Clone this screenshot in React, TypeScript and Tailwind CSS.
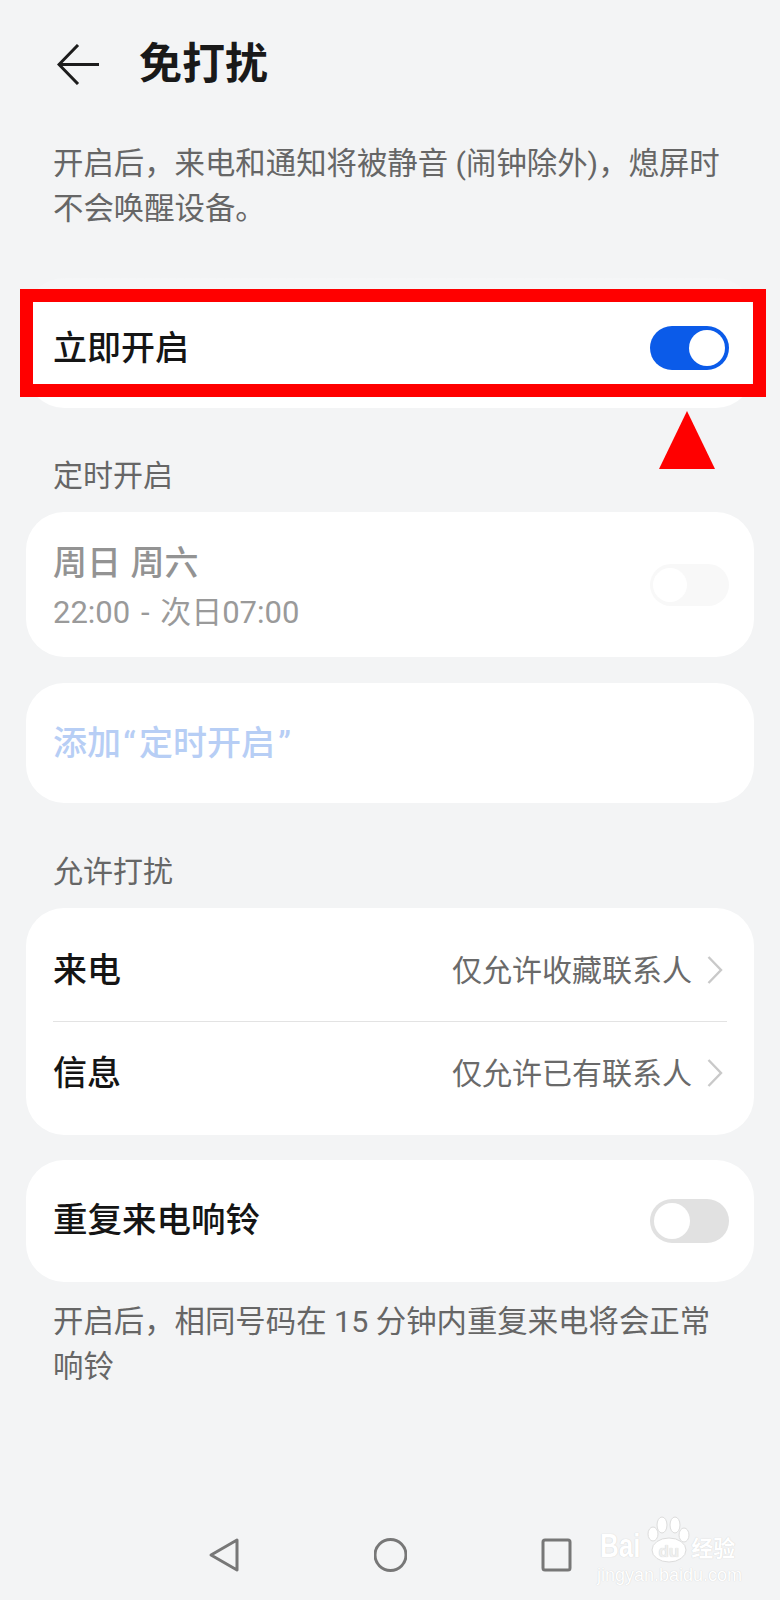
import React from 'react';

const Toggle: React.FC<{ kind: 'on' | 'off' | 'faint' }> = ({ kind }) => {
    if (kind === 'on') {
        return (
            <div className="w-[79px] h-[44px] rounded-full bg-[#0b5be9] flex items-center justify-end pr-[4px] shrink-0">
                <div className="w-[36px] h-[36px] rounded-full bg-white" />
            </div>
        );
    }
    if (kind === 'faint') {
        return (
            <div className="w-[79px] h-[42px] rounded-full bg-[#f8f8f8] flex items-center pl-[3px] shrink-0">
                <div className="w-[34px] h-[34px] rounded-full bg-white" />
            </div>
        );
    }
    return (
        <div className="w-[79px] h-[44px] rounded-full bg-[#e1e1e1] flex items-center pl-[4px] shrink-0">
            <div className="w-[36px] h-[36px] rounded-full bg-white" />
        </div>
    );
};

const Chevron = () => (
    <svg width="16" height="28" viewBox="0 0 16 28" fill="none" className="shrink-0 ml-[15px]">
        <polyline points="1.5,1 14,14 1.5,27" stroke="#c9c9c9" strokeWidth="2.4" />
    </svg>
);

const LinkRow: React.FC<{ label: string; value: string }> = ({ label, value }) => (
    <div className="h-[102px] flex items-center justify-between">
        <span className="text-[34px] font-medium text-[#151515]">{label}</span>
        <div className="flex items-center pr-[4px]">
            <span className="text-[30px] text-[#6a6a6a]">{value}</span>
            <Chevron />
        </div>
    </div>
);

const SectionLabel: React.FC<{ children: React.ReactNode }> = ({ children }) => (
    <h3 className="px-[53px] text-[30px] leading-[40px] text-[#666666]">{children}</h3>
);

const Watermark = () => (
    <div className="absolute left-[597px] top-[1512px] w-[145px] h-[74px] text-white [text-shadow:0_0_1px_#c8c8c8]">
        <svg width="48" height="52" viewBox="0 0 48 52" fill="#ffffff" stroke="#dcdcdc" strokeWidth="1" className="absolute left-[48px] top-0">
            <ellipse cx="8" cy="22" rx="5" ry="7" />
            <ellipse cx="17" cy="13" rx="5" ry="8" />
            <ellipse cx="30" cy="13" rx="5" ry="8" />
            <ellipse cx="39" cy="23" rx="5" ry="7" />
            <ellipse cx="24" cy="38" rx="17" ry="12" />
        </svg>
        <div className="absolute left-[3px] top-[24px] flex items-center whitespace-nowrap leading-none font-['Liberation_Sans','Noto_Sans_CJK_SC',sans-serif]">
            <span className="text-[26px] font-bold origin-bottom scale-y-125">Bai</span>
            <span className="relative text-[17px] font-bold ml-[18px] mt-[4px] text-[#efefef]">du</span>
            <span className="text-[22px] ml-[12px] font-bold">经验</span>
        </div>
        <div className="absolute left-0 top-[54px] text-[18px] leading-none whitespace-nowrap font-['Liberation_Sans',sans-serif]">jingyan.baidu.com</div>
    </div>
);

export default function App() {
    return (
        <div className="relative w-[780px] h-[1600px] overflow-hidden bg-[#f3f4f5] flex flex-col font-['Roboto','Noto_Sans_CJK_SC',sans-serif]">
            <header className="h-[128px] pl-[57px] flex items-center shrink-0">
                <svg width="42" height="41" viewBox="0 0 42 41" fill="none" stroke="#1c1c1c" strokeWidth="3">
                    <polyline points="21,1 2,20.5 21,40" />
                    <line x1="2" y1="20.5" x2="42" y2="20.5" />
                </svg>
                <h1 className="ml-[40px] text-[43px] leading-none font-semibold text-[#191919]">免打扰</h1>
            </header>

            <p className="mt-[13px] px-[53px] h-[90px] text-[30.4px] leading-[45px] text-[#666666] whitespace-nowrap">
                开启后，来电和通知将被静音 (闹钟除外)，熄屏时
                <br />
                不会唤醒设备。
            </p>

            <div className="mt-[47px] mx-[26px] h-[130px] pt-[10px] pl-[27px] pr-[25px] rounded-[38px] bg-linear-to-b from-[#f5f6f7] from-[8%] to-white to-[10%] flex items-center justify-between">
                <span className="text-[34px] font-medium text-[#151515]">立即开启</span>
                <Toggle kind="on" />
            </div>

            <div className="mt-[48px]">
                <SectionLabel>定时开启</SectionLabel>
            </div>
            <div className="mt-[16px] mx-[26px] h-[145px] pl-[27px] pr-[25px] rounded-[38px] bg-white flex items-center justify-between">
                <div className="pt-[6px]">
                    <div className="text-[34px] leading-[49px] font-medium text-[#939393] [word-spacing:1px]">周日 周六</div>
                    <div className="text-[31px] leading-[49px] text-[#9a9a9a] [word-spacing:3px]">22:00 - 次日07:00</div>
                </div>
                <Toggle kind="faint" />
            </div>

            <div className="mt-[26px] mx-[26px] h-[120px] pl-[27px] rounded-[38px] bg-white flex items-center">
                <span className="text-[34px] font-medium text-[#b7cef5]">
                    添加<span className="ml-[2px] mr-[3px]">“</span>定时开启<span className="ml-[3px]">”</span>
                </span>
            </div>

            <div className="mt-[49px]">
                <SectionLabel>允许打扰</SectionLabel>
            </div>
            <div className="mt-[16px] mx-[26px] px-[27px] pt-[11px] pb-[11px] rounded-[38px] bg-white">
                <LinkRow label="来电" value="仅允许收藏联系人" />
                <div className="h-px bg-[#e3e3e3]" />
                <LinkRow label="信息" value="仅允许已有联系人" />
            </div>

            <div className="mt-[25px] mx-[26px] h-[122px] pl-[27px] pr-[25px] rounded-[38px] bg-white flex items-center justify-between">
                <span className="text-[34.5px] font-medium text-[#151515]">重复来电响铃</span>
                <Toggle kind="off" />
            </div>

            <p className="mt-[17px] px-[53px] text-[30.4px] leading-[45px] text-[#666666]">
                开启后，相同号码在 15 分钟内重复来电将会正常
                <br />
                响铃
            </p>

            <nav className="mt-auto h-[90px] flex items-center justify-center gap-[134px] shrink-0">
                <svg width="33" height="36" viewBox="0 0 33 36" fill="none" stroke="#777777" strokeWidth="3" strokeLinejoin="round">
                    <path d="M30 3 L4 18 L30 33 Z" />
                </svg>
                <svg width="33" height="36" viewBox="0 0 33 36" fill="none" stroke="#777777" strokeWidth="3">
                    <circle cx="16.5" cy="18" r="15.5" />
                </svg>
                <svg width="33" height="36" viewBox="0 0 33 36" fill="none" stroke="#777777" strokeWidth="3">
                    <rect x="2" y="3" width="27" height="30" rx="2" />
                </svg>
            </nav>

            {/* annotation drawn on top of the screenshot */}
            <div className="absolute left-[20px] top-[289px] w-[746px] h-[108px] border-[13px] border-[#ff0000]" />
            <svg width="56" height="58" viewBox="0 0 56 58" className="absolute left-[659px] top-[411px]">
                <polygon points="28,0 56,58 0,58" fill="#ff0000" />
            </svg>

            <Watermark />
        </div>
    );
}
